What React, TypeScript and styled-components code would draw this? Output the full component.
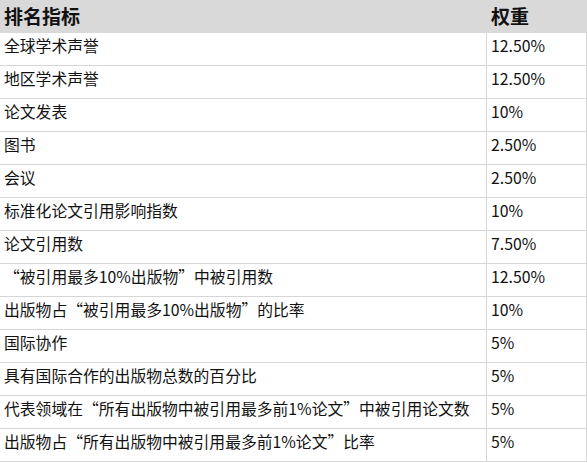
import styled, { createGlobalStyle } from "styled-components";

const GlobalStyle = createGlobalStyle`
  html, body {
    margin: 0;
    padding: 0;
    background: #ffffff;
  }
  body {
    font-family: "Noto Sans CJK SC", "Noto Sans", sans-serif;
    color: #111111;
  }
`;

const Table = styled.div`
  width: 587px;
  display: flex;
  flex-direction: column;
`;

const Row = styled.div<{ $head?: boolean }>`
  display: grid;
  grid-template-columns: 487px 100px;
  height: 33px;
  box-sizing: border-box;
  background: ${(p) => (p.$head ? "#d9d9d9" : "#ffffff")};
  border-bottom: 1px solid ${(p) => (p.$head ? "#d9d9d9" : "#d6d6d6")};
`;

const HeadCell = styled.div`
  font-size: 19px;
  font-weight: 700;
  line-height: 32px;
  padding-left: 4px;
  white-space: nowrap;
`;

const Cell = styled.div`
  font-size: 15.8px;
  line-height: 22px;
  padding: 2px 0 0 4px;
  white-space: nowrap;
  box-sizing: border-box;
  border-right: 1px solid #d6d6d6;
`;

const rows: [string, string][] = [
  ["全球学术声誉", "12.50%"],
  ["地区学术声誉", "12.50%"],
  ["论文发表", "10%"],
  ["图书", "2.50%"],
  ["会议", "2.50%"],
  ["标准化论文引用影响指数", "10%"],
  ["论文引用数", "7.50%"],
  ["“被引用最多10%出版物”中被引用数", "12.50%"],
  ["出版物占“被引用最多10%出版物”的比率", "10%"],
  ["国际协作", "5%"],
  ["具有国际合作的出版物总数的百分比", "5%"],
  ["代表领域在“所有出版物中被引用最多前1%论文”中被引用论文数", "5%"],
  ["出版物占“所有出版物中被引用最多前1%论文”比率", "5%"],
];

export default function App() {
  return (
    <>
      <GlobalStyle />
      <Table lang="zh-CN">
        <Row $head>
          <HeadCell>排名指标</HeadCell>
          <HeadCell>权重</HeadCell>
        </Row>
        {rows.map(([name, weight]) => (
          <Row key={name}>
            <Cell>{name}</Cell>
            <Cell>{weight}</Cell>
          </Row>
        ))}
      </Table>
    </>
  );
}
